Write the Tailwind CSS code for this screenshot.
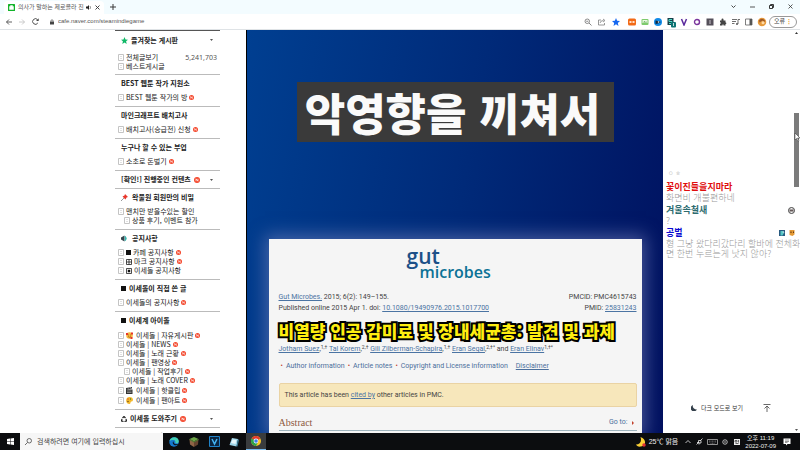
<!DOCTYPE html>
<html lang="ko">
<head>
  <meta charset="UTF-8">
  <meta name="viewport" content="width=device-width, initial-scale=1">
  <title>의사가 말하는 제로콜라 진실</title>
  <script src="https://cdn.jsdelivr.net/npm/@tailwindcss/browser@4"></script>
</head>
<body class="flex h-screen flex-col overflow-hidden bg-white font-['Liberation_Sans','Noto_Sans_CJK_KR',sans-serif] text-[7px] leading-[9px] text-[#222]">

  <!-- Shared icons -->
  <svg class="hidden">
    <symbol id="doc" viewBox="0 0 6 7"><path d="M.5.5h5v6h-5z" fill="#fff" stroke="#c4c4c4"/><path d="M2 2.5h2M2 4.5h2" stroke="#ccc" stroke-width=".6"/></symbol>
    <symbol id="new" viewBox="0 0 10 10"><circle cx="5" cy="5" r="5" fill="#f4472c"/><path d="M3.4 7V3l3.2 4V3" fill="none" stroke="#fff" stroke-width="1.2"/></symbol>
    <symbol id="caret" viewBox="0 0 6 4"><path d="M0 0h6L3 4z" fill="#555"/></symbol>
  </svg>

  <!-- Tab strip -->
  <div class="flex h-[14px] shrink-0 items-end bg-[#f3fcff]">
    <div class="ml-1 flex h-[13px] w-[100px] items-center rounded-t bg-white pl-1">
      <svg class="size-[7px] shrink-0" viewBox="0 0 14 14"><rect width="14" height="14" rx="1" fill="#12b32a"/><path d="M3 5h8v6H3zM5 5V3h4v2" fill="#fff" stroke="#fff"/></svg>
      <span class="ml-[3px] w-16 text-[6px] whitespace-nowrap text-[#555]">의사가 말하는 제로콜라 진</span>
      <svg class="ml-1 size-[5px] shrink-0" viewBox="0 0 10 10"><path d="M0 3h3l3-3v10L3 7H0z" fill="#222"/><path d="M8 2q2 3 0 6" fill="none" stroke="#222"/></svg>
      <button aria-label="탭 닫기" class="ml-1"><svg class="size-[5px]" viewBox="0 0 10 10"><path d="M1 1l8 8M9 1L1 9" stroke="#333" stroke-width="1.8"/></svg></button>
    </div>
    <button aria-label="새 탭" class="mb-1 ml-[6px]"><svg class="size-[6px]" viewBox="0 0 10 10"><path d="M5 0v10M0 5h10" stroke="#333" stroke-width="1.6"/></svg></button>
    <div class="mr-[7px] mb-[5px] ml-auto flex items-center gap-[14px]">
      <button aria-label="탭 검색"><svg class="size-[5px]" viewBox="0 0 10 10"><path d="M1 3l4 4 4-4" fill="none" stroke="#333" stroke-width="1.8"/></svg></button>
      <button aria-label="최소화"><svg class="size-[5px]" viewBox="0 0 10 10"><path d="M0 6h10" stroke="#444" stroke-width="1.8"/></svg></button>
      <button aria-label="이전 크기로"><svg class="size-[5px]" viewBox="0 0 10 10"><path d="M1 3h6v6H1zM3 3V1h6v6H7" fill="none" stroke="#222" stroke-width="1.8"/></svg></button>
      <button aria-label="닫기"><svg class="size-[5px]" viewBox="0 0 10 10"><path d="M1 1l8 8M9 1L1 9" stroke="#333" stroke-width="1.6"/></svg></button>
    </div>
  </div>

  <!-- Toolbar -->
  <div class="flex h-4 shrink-0 items-center border-b border-[#dfe3e6] bg-white pr-[3px] pl-[6px]">
    <div class="flex items-center gap-[7px]">
      <button aria-label="뒤로"><svg class="size-[6px]" viewBox="0 0 12 12"><path d="M12 6H1M6 1L1 6l5 5" fill="none" stroke="#444" stroke-width="1.7"/></svg></button>
      <button aria-label="앞으로"><svg class="size-[6px]" viewBox="0 0 12 12"><path d="M0 6h11M6 1l5 5-5 5" fill="none" stroke="#bbb" stroke-width="1.5"/></svg></button>
      <button aria-label="새로고침"><svg class="size-[7px]" viewBox="0 0 12 12"><path d="M10 8.500A4.800 4.800 0 1 1 9.800 3.200" fill="none" stroke="#444" stroke-width="1.6"/><path d="M7 5h4.500V.5z" fill="#444"/></svg></button>
    </div>
    <svg class="ml-[11px] h-[6px] w-1" viewBox="0 0 8 10"><path d="M0 4h8v6H0z" fill="#444"/><path d="M2 4V2.500a2 2 0 0 1 4 0V4" fill="none" stroke="#444" stroke-width="1.3"/></svg>
    <input aria-label="주소" value="cafe.naver.com/steamindiegame" class="ml-1 min-w-0 flex-1 text-[6px] text-[#555] outline-none">
    <div class="flex items-center gap-[6px] *:h-2 *:w-2">
      <svg viewBox="0 0 16 16"><circle cx="6.500" cy="6.500" r="4.500" fill="none" stroke="#666" stroke-width="1.5"/><path d="M10 10l5 5M4.500 6.500h4" stroke="#666" stroke-width="1.600"/></svg>
      <svg viewBox="0 0 16 16"><path d="M6 4H1v10h12v-4M4 10q1-5 7-5M10 2l4 3-4 3" fill="none" stroke="#777" stroke-width="1.500"/></svg>
      <svg viewBox="0 0 16 16"><path d="M8 0l2.300 5.500 5.700.5-4.400 3.800L13 16l-5-3.300L3 16l1.400-6.200L0 6l5.700-.5z" fill="#1668f0"/></svg>
    </div>
    <div class="ml-2 flex items-center gap-[5px] *:h-2 *:w-2">
      <svg viewBox="0 0 16 16"><rect y="1" width="16" height="14" rx="3" fill="#f26a17"/><path d="M3 6h4v4H3zM9 6h4v4H9z" fill="#ffe0c8"/></svg>
      <svg viewBox="0 0 16 16"><rect x="1" y="2" width="14" height="12" rx="2" fill="#7ecb6d"/><path d="M3 4h10v6H3z" fill="#eaf9e4"/><path d="M4 9l3-3 2 2 2-1 1 2z" fill="#55a948"/></svg>
      <svg viewBox="0 0 16 16"><circle cx="8" cy="8" r="8" fill="#118be8"/><path d="M3 5l5 1 6 2-6 3-5 1z" fill="#12283e"/><circle cx="9" cy="8" r="1.500" fill="#fff"/></svg>
      <svg class="overflow-visible" viewBox="0 0 16 16"><path d="M1 0h12v14H1z" fill="#173f4a"/><path d="M10 3H4v4h6v4H4" fill="none" stroke="#4edbc7" stroke-width="2"/><rect x="8" y="8" width="10" height="11" rx="2" fill="#0d7373"/><path d="M13 10v6" stroke="#fff" stroke-width="1.500"/></svg>
      <svg viewBox="0 0 16 16"><path d="M3 2l5 12 5-12" fill="none" stroke="#5a2a9d" stroke-width="3"/></svg>
      <svg viewBox="0 0 16 16"><circle cx="8" cy="8" r="5" fill="none" stroke="#7a359c" stroke-width="2.800"/></svg>
      <svg viewBox="0 0 16 16"><rect x="1" y="1" width="14" height="14" fill="#55505a"/><path d="M6 4h4v8H6z" fill="#8c8790"/></svg>
      <svg viewBox="0 0 16 16"><path d="M2 5h3V3a2 2 0 0 1 4 0v2h4v4h1a2 2 0 0 1 0 3h-1v3H9v-2H7v2H2v-4h2V9H2z" fill="#444"/></svg>
      <svg viewBox="0 0 16 16"><path d="M0 3h10M0 7h8M0 11h5M12 12V3h4" fill="none" stroke="#555" stroke-width="1.700"/><circle cx="10" cy="12" r="2" fill="#555"/></svg>
      <svg viewBox="0 0 16 16"><path d="M1 2h13v12H1z" fill="none" stroke="#555" stroke-width="1.500"/><path d="M9 2h5v12H9z" fill="#555"/></svg>
      <svg class="overflow-visible" viewBox="0 0 16 16"><circle cx="8" cy="8" r="8.500" fill="#e69a3c"/><path d="M2 5q5-7 12 0l-1 3-4-3-6 4z" fill="#9c5826"/><circle cx="10" cy="9.500" r="3" fill="#ffd9a4"/></svg>
    </div>
    <button class="ml-[3px] flex h-3 w-7 shrink-0 items-center justify-between rounded-full border border-[#999] px-1 text-[6px] text-[#444]">오류 <span class="font-bold text-[#eba32c]">⋮</span></button>
  </div>

  <!-- Page -->
  <main class="grid min-h-0 flex-1 grid-cols-[246fr_417fr_137fr]">

    <!-- Cafe menu -->
    <nav class="mr-[26px] ml-auto w-[105px] overflow-hidden border-t border-[#555] font-['Noto_Sans_CJK_KR',sans-serif] whitespace-nowrap text-[#222]">
      <section class="border-b border-[#bbb] pb-[3px]">
        <h2 class="flex h-[18px] items-center pl-[6px] font-bold">
          <svg class="mr-[3px] size-[7px]" viewBox="0 0 16 16"><path d="M8 0l2.300 5.500 5.700.5-4.400 3.800L13 16l-5-3.300L3 16l1.400-6.200L0 6l5.700-.5z" fill="#10b867"/></svg>즐겨찾는 게시판
          <button aria-label="펼치기" class="mr-[7px] ml-auto"><svg class="h-[2px] w-[3px]"><use href="#caret"/></svg></button>
        </h2>
        <ul class="mt-1 *:flex *:h-[9px] *:items-center *:gap-[2px] *:pl-[3px]">
          <li><svg class="h-[7px] w-[6px]"><use href="#doc"/></svg><a href="#">전체글보기</a><span class="mr-[3px] ml-auto font-['Noto_Sans',sans-serif] text-[#555]">5,241,703</span></li>
          <li><svg class="h-[7px] w-[6px]"><use href="#doc"/></svg><a href="#">베스트게시글</a></li>
        </ul>
      </section>
      <section class="border-b border-[#bbb] pb-1">
        <h2 class="mb-[2px] flex h-4 items-center pl-[6px] font-bold">BEST 웹툰 작가 지원소</h2>
        <ul class="*:flex *:h-[9px] *:items-center *:pl-[3px]">
          <li><svg class="mr-[2px] h-[7px] w-[6px]"><use href="#doc"/></svg><a href="#">BEST 웹툰 작가의 방</a><svg class="ml-[2px] size-[5px]"><use href="#new"/></svg></li>
        </ul>
      </section>
      <section class="border-b border-[#bbb] pb-1">
        <h2 class="mb-[2px] flex h-4 items-center pl-[6px] font-bold">마인크래프트 배치고사</h2>
        <ul class="*:flex *:h-[9px] *:items-center *:pl-[3px]">
          <li><svg class="mr-[2px] h-[7px] w-[6px]"><use href="#doc"/></svg><a href="#">배치고사(승급전) 신청</a><svg class="ml-[2px] size-[5px]"><use href="#new"/></svg></li>
        </ul>
      </section>
      <section class="border-b border-[#bbb] pb-1">
        <h2 class="mb-[2px] flex h-4 items-center pl-[6px] font-bold">누구나 할 수 있는 부업</h2>
        <ul class="*:flex *:h-[9px] *:items-center *:pl-[3px]">
          <li><svg class="mr-[2px] h-[7px] w-[6px]"><use href="#doc"/></svg><a href="#">소초로 돈벌기</a><svg class="ml-[2px] size-[5px]"><use href="#new"/></svg></li>
        </ul>
      </section>
      <section class="border-b border-[#bbb]">
        <h2 class="flex h-[17px] items-center pl-[6px] font-bold">[확인!] 진행중인 컨텐츠<svg class="ml-[3px] size-[6px]"><use href="#new"/></svg>
          <button aria-label="펼치기" class="mr-[7px] ml-auto"><svg class="h-[2px] w-[3px]"><use href="#caret"/></svg></button>
        </h2>
      </section>
      <section class="border-b border-[#bbb] pb-1">
        <h2 class="mb-[2px] flex h-4 items-center pl-[6px] font-bold"><svg class="mr-1 size-[7px]" viewBox="0 0 14 14"><path d="M8 0l6 6-3 1-2 4-6-6 4-2z" fill="#e8362b"/><path d="M6 8l-6 6" stroke="#777" stroke-width="1.500"/></svg>왁물원 회원만의 비밀</h2>
        <ul class="*:flex *:h-[9px] *:items-center *:pl-[3px]">
          <li><svg class="mr-[2px] h-[7px] w-[6px]"><use href="#doc"/></svg><a href="#">맨치만 받을수있는 할인</a></li>
          <li><svg class="mr-[2px] ml-[6px] h-[7px] w-[6px]"><use href="#doc"/></svg><a href="#">상품 후기, 이벤트 참가</a></li>
        </ul>
      </section>
      <section class="border-b border-[#bbb] pb-1">
        <h2 class="mb-[2px] flex h-4 items-center pl-[6px] font-bold"><svg class="mr-1 size-[7px]" viewBox="0 0 14 14"><path d="M0 5l7-4v12L0 9z" fill="#36454d"/><path d="M8 2q6 5 0 10z" fill="#37b5ae" stroke="#37b5ae"/></svg>공지사항</h2>
        <ul class="*:flex *:h-[9px] *:items-center *:pl-[3px]">
          <li><svg class="mr-[2px] h-[7px] w-[6px]"><use href="#doc"/></svg><svg class="mr-[2px] size-[5px]" viewBox="0 0 10 10"><path d="M0 0h10v10H0z" fill="#111"/></svg><a href="#">카페 공지사항</a><svg class="ml-[2px] size-[5px]"><use href="#new"/></svg></li>
          <li><svg class="mr-[2px] h-[7px] w-[6px]"><use href="#doc"/></svg><svg class="mr-[2px] size-[6px]" viewBox="0 0 12 12"><path d="M1 1h10v10H1zM6 1v10M1 6h10" fill="none" stroke="#111" stroke-width="1.500"/></svg><a href="#">마크 공지사항</a><svg class="ml-[2px] size-[5px]"><use href="#new"/></svg></li>
          <li><svg class="mr-[2px] h-[7px] w-[6px]"><use href="#doc"/></svg><svg class="mr-[2px] size-[6px]" viewBox="0 0 12 12"><path d="M1 1h10v10H1z" fill="none" stroke="#111" stroke-width="1.500"/><path d="M3.500 3.500h5v5h-5z" fill="#111"/></svg><a href="#">이세돌 공지사항</a></li>
        </ul>
      </section>
      <section class="border-b border-[#bbb] pb-1">
        <h2 class="mb-[2px] flex h-4 items-center pl-[6px] font-bold"><svg class="mr-[3px] size-[5px]" viewBox="0 0 10 10"><path d="M0 0h10v10H0z" fill="#111"/></svg>이세돌이 직접 쓴 글</h2>
        <ul class="*:flex *:h-[9px] *:items-center *:pl-[3px]">
          <li><svg class="mr-[2px] h-[7px] w-[6px]"><use href="#doc"/></svg><a href="#">이세돌의 공지사항</a><svg class="ml-[2px] size-[5px]"><use href="#new"/></svg></li>
        </ul>
      </section>
      <section class="border-b border-[#bbb] pb-1">
        <h2 class="mb-[2px] flex h-4 items-center pl-[6px] font-bold"><svg class="mr-[3px] size-[5px]" viewBox="0 0 10 10"><path d="M0 0h10v10H0z" fill="#111"/></svg>이세계 아이돌</h2>
        <ul class="*:flex *:items-center *:pl-[3px]">
          <li class="h-[10px]"><svg class="mr-[2px] h-[7px] w-[6px]"><use href="#doc"/></svg><svg class="mr-[3px] size-[7px]" viewBox="0 0 14 14"><circle cx="7" cy="7" r="6.500" fill="#f6b73c"/><path d="M0 2h4v4H0zM10 1h4v4h-4zM9 10h4v4H9z" fill="#e8332b"/><path d="M4 6h2M8 6h2M4 9q3 3 6 0" fill="none" stroke="#6d3310"/></svg><a href="#">이세돌 | 자유게시판</a><svg class="ml-[2px] size-[5px]"><use href="#new"/></svg></li>
          <li class="h-[9px]"><svg class="mr-[2px] h-[7px] w-[6px]"><use href="#doc"/></svg><a href="#">이세돌 | NEWS</a><svg class="ml-[2px] size-[5px]"><use href="#new"/></svg></li>
          <li class="h-[9px]"><svg class="mr-[2px] h-[7px] w-[6px]"><use href="#doc"/></svg><a href="#">이세돌 | 노래 근황</a><svg class="ml-[2px] size-[5px]"><use href="#new"/></svg></li>
          <li class="h-[9px]"><svg class="mr-[2px] h-[7px] w-[6px]"><use href="#doc"/></svg><a href="#">이세돌 | 팬영상</a><svg class="ml-[2px] size-[5px]"><use href="#new"/></svg></li>
          <li class="h-[9px]"><svg class="mr-[2px] ml-[6px] h-[7px] w-[6px]"><use href="#doc"/></svg><a href="#">이세돌 | 작업후기</a><svg class="ml-[2px] size-[5px]"><use href="#new"/></svg></li>
          <li class="h-[9px]"><svg class="mr-[2px] h-[7px] w-[6px]"><use href="#doc"/></svg><a href="#">이세돌 | 노래 COVER</a><svg class="ml-[2px] size-[5px]"><use href="#new"/></svg></li>
          <li class="h-[10px]"><svg class="mr-[2px] h-[7px] w-[6px]"><use href="#doc"/></svg><svg class="mr-[3px] size-[7px]" viewBox="0 0 14 14"><path d="M0 5h13v9H0zM0 2l12-2v3L0 5z" fill="#333"/><path d="M3 1l2 3M8 0l2 3M2 8h9M2 11h9" stroke="#ddd"/></svg><a href="#">이세돌 | 핫클립</a><svg class="ml-[2px] size-[5px]"><use href="#new"/></svg></li>
          <li class="h-[10px]"><svg class="mr-[2px] h-[7px] w-[6px]"><use href="#doc"/></svg><svg class="mr-[3px] size-[7px]" viewBox="0 0 14 14"><path d="M7 0c9 0 8 9 4 9-3 0-1 5-4 5C-2 14-2 0 7 0z" fill="#f4b92c"/><circle cx="4" cy="4" r="1.300" fill="#d93d2b"/><circle cx="9" cy="4" r="1.300" fill="#3c7a3b"/><circle cx="4" cy="9" r="1.300" fill="#5a3a17"/></svg><a href="#">이세돌 | 팬아트</a><svg class="ml-[2px] size-[5px]"><use href="#new"/></svg></li>
        </ul>
      </section>
      <section class="border-b border-[#bbb]">
        <h2 class="flex h-[17px] items-center pl-[6px] font-bold"><svg class="mr-[3px] size-[6px]" viewBox="0 0 12 12"><path d="M3 4l3-3 3 3M10 6l1 4-4 1M5 11l-4-1 1-4" fill="none" stroke="#222" stroke-width="2.400"/></svg>이세돌 도와주기<svg class="ml-[3px] size-[6px]"><use href="#new"/></svg>
          <button aria-label="펼치기" class="mr-[7px] ml-auto"><svg class="h-[2px] w-[3px]"><use href="#caret"/></svg></button>
        </h2>
      </section>
      <section>
        <h2 class="flex h-4 items-center pl-[14px] font-bold">클립 게시판</h2>
      </section>
    </nav>

    <!-- Video -->
    <div class="flex flex-col items-center overflow-hidden border-l border-black bg-linear-100 from-[#003f91] via-[#002a79] to-[#00105f]">
      <p class="mt-[52px] flex h-[60px] w-[317px] shrink-0 items-center justify-center bg-[#3a3a3a] pr-[5px] font-['Noto_Sans_CJK_KR',sans-serif] text-[44px] leading-none font-black whitespace-nowrap text-[#fafafa]">악영향을 끼쳐서</p>

      <article class="mt-[97px] w-[373px] flex-1 bg-[#f5f5f5] pr-[5px] pl-[10px] font-[Roboto,sans-serif] text-[#444] shadow-[0_0_16px_4px_#8790c680]">
        <div class="mx-auto mt-[7px] w-[102px] font-['Open_Sans',sans-serif] font-semibold">
          <div class="text-[21px] leading-[20px] text-[#1c5088]">gut</div>
          <div class="-mt-[3px] pl-[13px] text-[16px] leading-[18px] text-[#0c7296]">microbes</div>
        </div>
        <div class="mt-[11px] flex justify-between leading-[11px]">
          <div><a href="#" class="text-[#4b74a3] underline">Gut Microbes.</a> 2015; 6(2): 149–155.<br>Published online 2015 Apr 1. doi: <a href="#" class="text-[#4b74a3] underline">10.1080/19490976.2015.1017700</a></div>
          <div class="text-right">PMCID: PMC4615743<br>PMID: <a href="#" class="text-[#4b74a3] underline">25831243</a></div>
        </div>
        <h1 class="mt-[7px] font-['Noto_Sans_CJK_KR',sans-serif] text-[17px] leading-[20px] font-black whitespace-nowrap text-[#ffee10] [-webkit-text-stroke:4px_#000] [paint-order:stroke_fill]">비열량 인공 감미료 및 장내세균총: 발견 및 과제</h1>
        <p class="mt-1 whitespace-nowrap">
          <a href="#" class="text-[#4b74a3] underline">Jotham Suez</a>,<sup class="text-[5px]">1,†</sup>
          <a href="#" class="text-[#4b74a3] underline">Tal Korem</a>,<sup class="text-[5px]">2,†</sup>
          <a href="#" class="text-[#4b74a3] underline">Gili Zilberman-Schapira</a>,<sup class="text-[5px]">1,†</sup>
          <a href="#" class="text-[#4b74a3] underline">Eran Segal</a>,<sup class="text-[5px]">2,†*</sup> and
          <a href="#" class="text-[#4b74a3] underline">Eran Elinav</a><sup class="text-[5px]">1,†*</sup>
        </p>
        <p class="mt-2 flex gap-[3px] pl-[2px] whitespace-nowrap text-[#4b6f9c]">
          <span class="text-[#c2402b]">•</span><a href="#">Author information</a>
          <span class="text-[#c2402b]">•</span><a href="#">Article notes</a>
          <span class="text-[#c2402b]">•</span><a href="#">Copyright and License information</a>
          <a href="#" class="ml-[5px] underline">Disclaimer</a>
        </p>
        <p class="mt-3 flex h-6 items-center rounded-xs border border-[#ead3a4] bg-[#f7e7bb] pl-[5px] whitespace-pre">This article has been <a href="#" class="text-[#4b74a3] underline">cited by</a> other articles in PMC.</p>
        <div class="mt-[10px] flex items-center justify-between border-b border-[#9fb4bd] pb-[2px]">
          <h2 class="font-['Liberation_Serif',serif] text-[10px] leading-[11px] text-[#8d5a3e]">Abstract</h2>
          <a href="#" class="flex items-center gap-1 pr-[3px] text-[#4b6f9c]">Go to: <svg class="h-1 w-[2px]" viewBox="0 0 4 8"><path d="M0 0l4 4-4 4z" fill="#c2402b"/></svg></a>
        </div>
      </article>
    </div>

    <!-- Chat -->
    <aside class="flex min-w-0">
      <div class="flex min-w-0 flex-1 flex-col pt-[138px] pl-[3px] font-['Noto_Sans_CJK_KR',sans-serif] text-[9px] leading-[10px] font-bold">
        <p class="mb-1 pl-[2px] text-[6px] font-normal text-[#ccc]">ㅇ ㅎ</p>
        <div class="mb-[2px]">
          <div class="text-[#e00d0d]">꽃이진들을지마라</div>
          <p class="mt-[1px] font-light text-[#999]">화면비 개불편하네</p>
        </div>
        <div class="mb-[2px]">
          <div class="flex items-center text-[#2d6c70]">겨울속철새
            <svg class="mr-[-2px] ml-auto size-[7px]" viewBox="0 0 14 14"><circle cx="7" cy="7" r="6" fill="#eee" stroke="#444" stroke-width="2"/><path d="M3 5h8v4H3z" fill="#665a5a"/></svg>
          </div>
          <p class="mt-[1px] font-light text-[#999]">?</p>
        </div>
        <div>
          <div class="flex items-center text-[#0b0bd0]">공벌
            <svg class="mr-1 ml-auto size-[6px]" viewBox="0 0 12 12"><path d="M0 0h12v12H0z" fill="#285a80"/><path d="M3 2h5l2 4-3 5H3z" fill="#55c6c4"/><path d="M8 2l3 3H7z" fill="#fff"/></svg>
            <svg class="mr-[-2px] size-[6px]" viewBox="0 0 12 12"><path d="M1 0h10v9l-4 3-6-2z" fill="#e49a35"/><path d="M3 3h2v3H3zM8 3h2v3H8z" fill="#63340f"/></svg>
          </div>
          <p class="mt-[1px] font-light whitespace-nowrap text-[#999]">형 그냥 왔다리갔다리 할바에 전체화<br>면 한번 누르는게 낫지 않아?</p>
        </div>
        <div class="mt-auto mb-5 flex items-center pl-[25px] text-[6px] font-normal text-[#333]">
          <button class="flex items-center gap-1 whitespace-nowrap"><svg class="size-[6px]" viewBox="0 0 12 12"><path d="M4 0a6.500 6.500 0 1 0 8 8.500A6.500 6.500 0 0 1 4 0z" fill="#333f4a"/></svg>다크 모드로 보기</button>
          <button aria-label="맨 위로" class="ml-5"><svg class="size-2" viewBox="0 0 16 16"><path d="M1 1h14M8 16V4M3 9l5-5 5 5" fill="none" stroke="#444" stroke-width="1.600"/></svg></button>
        </div>
      </div>
      <!-- Scrollbar -->
      <div class="flex w-[7px] shrink-0 flex-col items-center py-[2px]">
        <svg class="h-[2px] w-[3px]" viewBox="0 0 6 4"><path d="M0 4h6L3 0z" fill="#333"/></svg>
        <div class="relative mt-[79px] h-[74px] w-[5px] bg-[#7b7b7b]">
          <svg class="absolute top-5 left-[1px] h-2 w-[6px] overflow-visible" viewBox="0 0 12 16"><path d="M0 0v14l3-3 3 6 2-1-3-6h5z" fill="#fff" stroke="#333"/></svg>
        </div>
        <svg class="mt-auto h-[2px] w-[3px]"><use href="#caret"/></svg>
      </div>
    </aside>
  </main>

  <!-- Taskbar -->
  <footer class="flex h-[17px] shrink-0 items-center bg-[#0c0d0f] text-[#eee]">
    <button aria-label="시작" class="flex w-5 justify-center"><svg class="size-[7px]" viewBox="0 0 14 14"><path d="M0 2l6-1v5.500H0zM7 1l7-1v6.500H7zM0 7.500h6V13l-6-1zM7 7.500h7V14l-7-1z" fill="#fff"/></svg></button>
    <label class="flex h-full w-[143px] items-center bg-[#f6f6f6] pl-[5px]">
      <svg class="size-[7px] shrink-0" viewBox="0 0 14 14"><circle cx="8.500" cy="5.500" r="4.500" fill="none" stroke="#333" stroke-width="1.400"/><path d="M5 9l-5 5" stroke="#333" stroke-width="1.400"/></svg>
      <input aria-label="검색" placeholder="검색하려면 여기에 입력하십시" class="ml-[5px] min-w-0 flex-1 font-['Noto_Sans_CJK_KR',sans-serif] outline-none placeholder:text-[#444]">
    </label>
    <div class="flex h-full items-center *:flex *:h-full *:w-[20px] *:items-center *:justify-center">
      <button aria-label="Edge" class="ml-[1px]"><svg class="size-[10px]" viewBox="0 0 20 20"><circle cx="10" cy="10" r="9.500" fill="#1679cf"/><path d="M1 8C3-2 20-2 19.500 9c-.5 5-7 4-7 2 1-3-1-5-4-5S2 7 1 8z" fill="#43cfb6"/><path d="M8 9c-2 5 3 9 8 7l3-1-2-1c-5 1-8-1-8-5z" fill="#0c1420"/></svg></button>
      <button aria-label="Minecraft"><svg class="size-[10px]" viewBox="0 0 20 20"><path d="M10 0l9 4-9 5-9-5z" fill="#6da548"/><path d="M1 4l9 5v11l-8-5z" fill="#8f6446"/><path d="M19 4l-9 5v11l8-5z" fill="#664430"/><path d="M1 4l9 5v2L1 6zM19 4l-9 5v2l9-5z" fill="#4b7b32"/></svg></button>
      <button aria-label="Vegas"><svg class="size-[11px]" viewBox="0 0 22 22"><path d="M1 1h20v20H1z" fill="#0b2540" stroke="#1f82c8" stroke-width="2"/><path d="M6 6l5 10 5-10" fill="none" stroke="#45b4f2" stroke-width="3"/></svg></button>
      <button aria-label="메모장"><svg class="size-[10px]" viewBox="0 0 20 20"><path d="M6 2l12 2-3 15-14-3z" fill="#9fd5e8"/><path d="M7 5l8 1-2 8-9-2z" fill="#e8f7fb"/><path d="M15 19l3-15 2 2-3 13z" fill="#357894"/></svg></button>
      <button aria-label="Chrome" class="ml-[2px] border-b border-[#76b9ed] bg-[#3a3c3e]"><svg class="size-[10px]" viewBox="0 0 20 20"><circle cx="10" cy="10" r="10" fill="#f6c528"/><path d="M10 10L1.300 5A10 10 0 0 1 18.700 5z" fill="#e33b2e"/><path d="M10 10L1.300 5A10 10 0 0 0 10 20l4-8z" fill="#2da44e"/><circle cx="10" cy="10" r="4.800" fill="#fff"/><circle cx="10" cy="10" r="3.600" fill="#3b7ded"/></svg></button>
    </div>
    <div class="ml-auto flex items-center pr-[9px] whitespace-nowrap">
      <svg class="size-[10px]" viewBox="0 0 20 20"><path d="M9 0c12 4 12 17 1 19-5 1-9-1-10-4C8 15 12 9 9 0z" fill="#f9cf35"/><circle cx="16" cy="16" r="3.500" fill="#df2e35"/></svg>
      <span class="ml-[3px]">25℃ 맑음</span>
      <svg class="ml-[7px] size-[6px]" viewBox="0 0 12 12"><path d="M1 8l5-5 5 5" fill="none" stroke="#eee" stroke-width="1.600"/></svg>
      <svg class="ml-[5px] size-[7px]" viewBox="0 0 14 14"><path d="M1 13l4-4M5 5h5v5H5zM9 5l4-4M2 9h4v4" fill="none" stroke="#eee" stroke-width="1.600"/></svg>
      <svg class="ml-1 h-[6px] w-[11px]" viewBox="0 0 22 12"><path d="M1 1h20v10H1z" fill="none" stroke="#bbb" stroke-width="1.500"/><path d="M4 4h14M4 6h14M7 9h8" stroke="#999" stroke-dasharray="2 1"/></svg>
      <svg class="ml-1 size-[6px]" viewBox="0 0 12 12"><circle cx="6" cy="6" r="4.500" fill="none" stroke="#ddd" stroke-width="1.600"/><path d="M4 6h4" stroke="#ddd" stroke-width="1.500"/></svg>
      <svg class="ml-[6px] size-[6px]" viewBox="0 0 12 12"><path d="M0 0h12v12H0z" fill="#eee"/><path d="M2 3h4v3H2zM9 2v5M3 9h6" fill="none" stroke="#222" stroke-width="1.300"/></svg>
      <div class="ml-[5px] text-center text-[6px] leading-[8px]">오후 11:19<br>2022-07-09</div>
      <button aria-label="알림" class="ml-[7px]"><svg class="size-2" viewBox="0 0 16 16"><path d="M1 1h14v11H9l-3 3v-3H1z" fill="#fff"/><path d="M4 4h8M4 7h8M4 9h5" stroke="#333"/></svg></button>
    </div>
  </footer>

</body>
</html>
